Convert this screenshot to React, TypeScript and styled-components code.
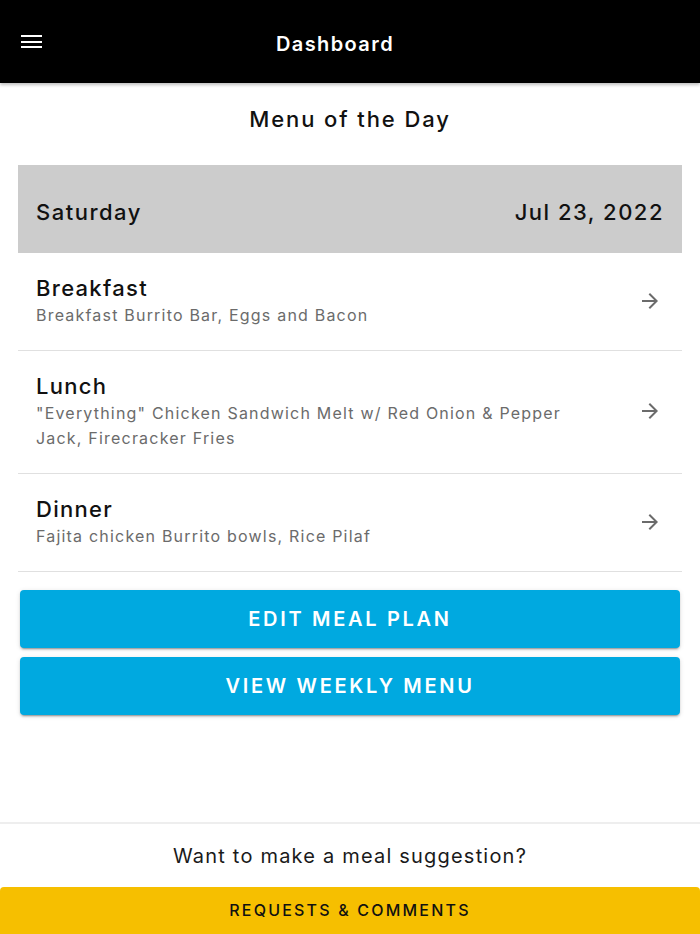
import styled, { createGlobalStyle } from "styled-components";

const GlobalStyle = createGlobalStyle`
  html, body {
    margin: 0;
    padding: 0;
    background: #ffffff;
    font-family: Inter, "Open Sans", "Liberation Sans", sans-serif;
    color: #111111;
  }
  * {
    box-sizing: border-box;
  }
`;

type Meal = { title: string; items: string };

const meals: Meal[] = [
  { title: "Breakfast", items: "Breakfast Burrito Bar, Eggs and Bacon" },
  {
    title: "Lunch",
    items: "\"Everything\" Chicken Sandwich Melt w/ Red Onion & Pepper Jack, Firecracker Fries",
  },
  { title: "Dinner", items: "Fajita chicken Burrito bowls, Rice Pilaf" },
];

const Page = styled.div`
  width: 700px;
  height: 934px;
  display: flex;
  flex-direction: column;
  overflow: hidden;
`;

const TopBar = styled.header`
  height: 83px;
  flex-shrink: 0;
  background: #000000;
  display: flex;
  align-items: center;
  padding: 0 21px;
  position: relative;
  box-shadow: 0 2px 3px rgba(0, 0, 0, 0.25);
  z-index: 1;
`;

const MenuButton = styled.button`
  width: 21px;
  height: 13px;
  padding: 0;
  margin-top: 0;
  border: none;
  background: transparent;
  display: flex;
  flex-direction: column;
  justify-content: space-between;
  cursor: pointer;

  span {
    display: block;
    height: 2px;
    background: #ffffff;
  }
`;

const BarTitle = styled.h1`
  flex: 1;
  margin: 4px 0 0 -21px;
  padding-right: 30px;
  text-align: center;
  color: #ffffff;
  font-size: 20px;
  font-weight: 600;
  letter-spacing: 1.4px;
`;

const Content = styled.main`
  flex: 1;
  padding: 0 18px;
  display: flex;
  flex-direction: column;
`;

const SectionTitle = styled.h2`
  margin: 21px 0 0;
  height: 61px;
  text-align: center;
  font-size: 22px;
  font-weight: 500;
  letter-spacing: 1.9px;
  line-height: 30px;
`;

const DayBand = styled.div`
  height: 88px;
  background: #cccccc;
  display: flex;
  align-items: center;
  justify-content: space-between;
  padding: 5px 18px 0;
  font-size: 22px;
  font-weight: 500;
  letter-spacing: 1.5px;
`;

const MealRow = styled.div`
  display: flex;
  align-items: center;
  padding: 20px 18px 22px;
  border-bottom: 1px solid #e0e0e0;
  cursor: pointer;
`;

const MealText = styled.div`
  flex: 1;
  padding-right: 40px;
`;

const MealTitle = styled.div`
  font-size: 22px;
  font-weight: 500;
  line-height: 30px;
  letter-spacing: 1.3px;
`;

const MealItems = styled.div`
  font-size: 16px;
  line-height: 25px;
  color: #6b6b6b;
  letter-spacing: 1.2px;
`;

const Arrow = styled.svg`
  width: 24px;
  height: 24px;
  fill: #6b6b6b;
  flex-shrink: 0;
  margin-right: 2px;
`;

const Actions = styled.div`
  display: flex;
  flex-direction: column;
  gap: 9px;
  margin-top: 18px;
  padding: 0 2px;
`;

const PrimaryButton = styled.button`
  height: 58px;
  border: none;
  border-radius: 4px;
  background: #00a9e0;
  color: #ffffff;
  font-family: inherit;
  font-size: 20px;
  font-weight: 600;
  letter-spacing: 2.7px;
  text-transform: uppercase;
  box-shadow: 0 3px 1px -2px rgba(0, 0, 0, 0.2), 0 2px 2px 0 rgba(0, 0, 0, 0.14),
    0 1px 5px 0 rgba(0, 0, 0, 0.12);
  cursor: pointer;
`;

const Footer = styled.footer`
  flex-shrink: 0;
  border-top: 2px solid #eeeeee;
  display: flex;
  flex-direction: column;
  align-items: center;
`;

const Prompt = styled.p`
  margin: 0;
  height: 63px;
  display: flex;
  align-items: center;
  font-size: 20px;
  font-weight: 400;
  letter-spacing: 1.2px;
  color: #1a1a1a;
`;

const RequestButton = styled.button`
  width: 100%;
  height: 47px;
  border: none;
  border-radius: 4px 4px 0 0;
  background: #f6bf00;
  color: #111111;
  font-family: inherit;
  font-size: 16px;
  font-weight: 500;
  letter-spacing: 2.2px;
  text-transform: uppercase;
  padding-bottom: 3px;
  cursor: pointer;
`;

export default function App() {
  return (
    <>
      <GlobalStyle />
      <Page>
        <TopBar>
          <MenuButton aria-label="menu">
            <span />
            <span />
            <span />
          </MenuButton>
          <BarTitle>Dashboard</BarTitle>
        </TopBar>
        <Content>
          <SectionTitle>Menu of the Day</SectionTitle>
          <DayBand>
            <span>Saturday</span>
            <span>Jul 23, 2022</span>
          </DayBand>
          {meals.map((meal) => (
            <MealRow key={meal.title}>
              <MealText>
                <MealTitle>{meal.title}</MealTitle>
                <MealItems>{meal.items}</MealItems>
              </MealText>
              <Arrow viewBox="0 0 24 24">
                <path d="M12 4l-1.41 1.41L16.17 11H4v2h12.17l-5.58 5.59L12 20l8-8z" />
              </Arrow>
            </MealRow>
          ))}
          <Actions>
            <PrimaryButton>Edit Meal Plan</PrimaryButton>
            <PrimaryButton>View Weekly Menu</PrimaryButton>
          </Actions>
        </Content>
        <Footer>
          <Prompt>Want to make a meal suggestion?</Prompt>
          <RequestButton>Requests &amp; Comments</RequestButton>
        </Footer>
      </Page>
    </>
  );
}
